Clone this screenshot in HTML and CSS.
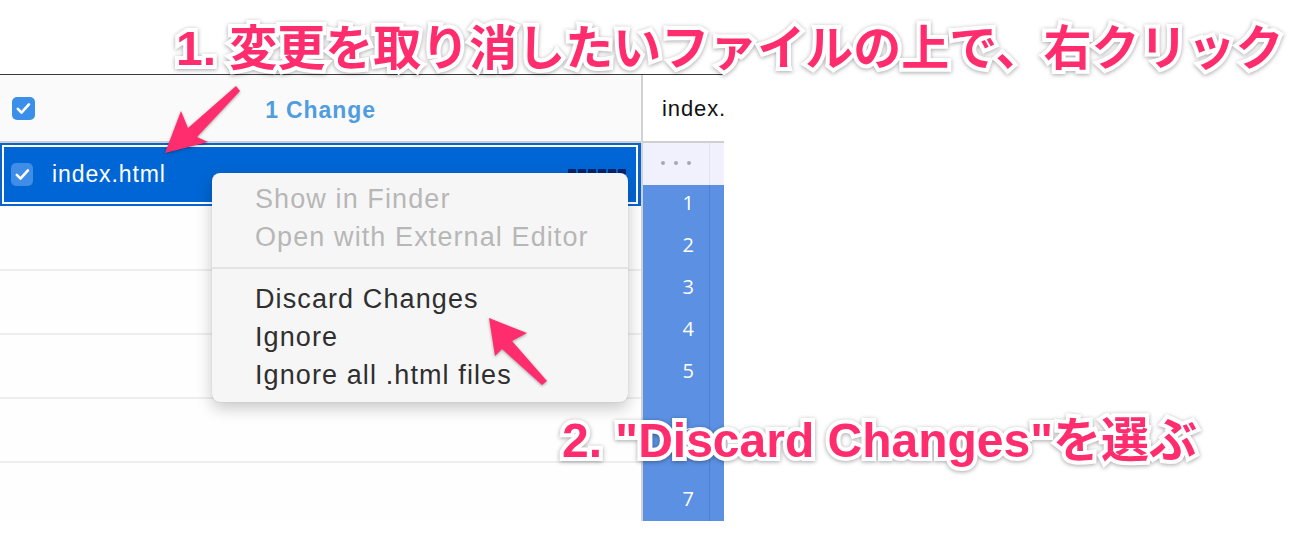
FILE: index.html
```html
<!DOCTYPE html>
<html lang="ja">
<head>
<meta charset="utf-8">
<link rel="stylesheet" href="styles.css">
</head>
<body>
<div class="stage">
  <div class="window">
    <div class="changes">
      <div class="changes-header">
        <span class="cb cb-header"><svg viewBox="0 0 24 24"><path d="M5.5 12.5l4.2 4.2 8.5-9.4" /></svg></span>
        <span class="count">1 Change</span>
      </div>
      <div class="file-row selected">
        <div class="file-inner">
          <span class="cb cb-row"><svg viewBox="0 0 24 24"><path d="M5.5 12.5l4.2 4.2 8.5-9.4" /></svg></span>
          <span class="fname">index.html</span>
          <span class="dashes"></span>
        </div>
      </div>
      <div class="file-row empty first"></div>
      <div class="file-row empty"></div>
      <div class="file-row empty"></div>
      <div class="file-row empty"></div>
    </div>
    <div class="diff">
      <div class="diff-header"><span class="diff-title">index.html</span></div>
      <div class="hunk"><span class="gut"><i class="dot"></i><i class="dot"></i><i class="dot"></i></span><span class="code"></span></div>
      <div class="line"><span class="gut">1</span><span class="code"></span></div>
      <div class="line"><span class="gut">2</span><span class="code"></span></div>
      <div class="line"><span class="gut">3</span><span class="code"></span></div>
      <div class="line"><span class="gut">4</span><span class="code"></span></div>
      <div class="line"><span class="gut">5</span><span class="code"></span></div>
      <div class="line tall"><span class="gut">6</span><span class="code"></span></div>
      <div class="line"><span class="gut">7</span><span class="code"></span></div>
    </div>
  </div>

  <div class="menu">
    <div class="item disabled">Show in Finder</div>
    <div class="item disabled">Open with External Editor</div>
    <div class="sep"></div>
    <div class="item">Discard Changes</div>
    <div class="item">Ignore</div>
    <div class="item">Ignore all .html files</div>
  </div>

  <div class="note note1">1. 変更を取り消したいファイルの上で、右クリック</div>
  <div class="note note2">2. "Discard Changes"を選ぶ</div>

  <svg class="arrows" width="1300" height="560" viewBox="0 0 1300 560">
    <path class="arrow" d="M165 153 L181 111 L188 128 L236 86 L240 91 L197 137 L208 142 Z" />
    <path class="arrow" d="M489 318 L527 333 L512 341 L547 381 L542 385 L502 349 L495 356 Z" />
  </svg>
</div>
</body>
</html>
```

FILE: styles.css
```css
html, body {
  margin: 0;
  padding: 0;
  background: #ffffff;
}

.stage {
  position: relative;
  width: 1300px;
  height: 560px;
  overflow: hidden;
  font-family: "Liberation Sans", Arial, sans-serif;
}

.window {
  margin-top: 74px;
  width: 724px;
  height: 446px;
  border-top: 1px solid #3a3a3a;
  display: flex;
  overflow: hidden;
}

/* left panel */
.changes {
  width: 641px;
  flex: none;
  border-right: 2px solid #d2d2d2;
  background: #fefefe;
  display: flex;
  flex-direction: column;
}

.changes-header {
  height: 66px;
  flex: none;
  background: #fafafa;
  border-bottom: 2px solid #d0d0d0;
  position: relative;
  display: flex;
  align-items: center;
  justify-content: center;
}

.cb {
  width: 23px;
  height: 23px;
  border-radius: 5px;
  background: #3b8fe8;
  display: flex;
  align-items: center;
  justify-content: center;
  flex: none;
}

.cb svg {
  width: 21px;
  height: 21px;
  fill: none;
  stroke: #ffffff;
  stroke-width: 3;
  stroke-linecap: round;
  stroke-linejoin: round;
}

.cb-header {
  position: absolute;
  left: 12px;
  top: 22px;
}

.count {
  font-size: 23px;
  font-weight: bold;
  color: #4f9de0;
  letter-spacing: 0.9px;
  margin-top: 5px;
}

.file-row {
  flex: none;
  height: 62px;
  border-bottom: 2px solid #eeeeee;
  box-sizing: content-box;
}

.file-row.first {
  height: 63px;
}

.file-row.selected {
  height: 63px;
  border-bottom: none;
  box-sizing: border-box;
  border: 2px solid #0a63cf;
  border-right-width: 3px;
  padding: 2px;
  background: #ffffff;
}

.file-inner {
  height: 100%;
  background: #0166d5;
  display: flex;
  align-items: center;
  padding-left: 7px;
  position: relative;
}

.cb-row {
  background: #3f8de6;
  width: 22px;
  height: 23px;
}

.fname {
  margin-left: 19px;
  font-size: 23px;
  color: #ffffff;
  letter-spacing: 0.9px;
}

.dashes {
  position: absolute;
  left: 564px;
  top: 22px;
  width: 58px;
  height: 5px;
  background: repeating-linear-gradient(90deg, #06246b 0 8px, transparent 8px 10px);
}

/* right diff panel */
.diff {
  flex: 1;
  display: flex;
  flex-direction: column;
  background: #ffffff;
  overflow: hidden;
}

.diff-header {
  height: 66px;
  flex: none;
  border-bottom: 2px solid #d0d0d0;
  display: flex;
  align-items: center;
  padding-left: 19px;
  overflow: hidden;
  white-space: nowrap;
}

.diff-title {
  font-size: 22px;
  color: #111111;
  letter-spacing: 0.9px;
  margin-top: 1px;
}

.hunk, .line {
  display: flex;
  flex: none;
  height: 42px;
}

.gut {
  width: 51px;
  flex: none;
  padding-right: 15px;
  padding-bottom: 7px;
  box-sizing: content-box;
  display: flex;
  align-items: center;
  justify-content: flex-end;
  font-family: "Open Sans", "Liberation Sans", sans-serif;
  font-size: 20px;
}

.code {
  flex: 1;
}

.hunk {
  background: #f1f1fd;
}

.hunk .gut {
  border-right: 1px solid #e2e2f6;
  gap: 9px;
  padding-right: 18px;
  width: 48px;
  padding-bottom: 2px;
}

.dot {
  width: 4px;
  height: 4px;
  border-radius: 50%;
  background: #a8a8b4;
}

.line {
  background: #5b90e2;
}

.line .gut {
  color: #ffffff;
  border-right: 1px solid #4c80d4;
}

.line.tall {
  height: 86px;
}

/* context menu overlay */
.menu {
  position: absolute;
  left: 212px;
  top: 173px;
  width: 416px;
  box-sizing: border-box;
  padding: 7px 0 8px;
  background: #f6f6f6;
  border-radius: 8px;
  box-shadow: 0 6px 16px rgba(0, 0, 0, 0.22), 0 0 1px rgba(0, 0, 0, 0.25);
}

.item {
  height: 38px;
  line-height: 38px;
  padding-left: 43px;
  font-size: 27px;
  letter-spacing: 1.1px;
  color: #2f2f2f;
  white-space: nowrap;
}

.item.disabled {
  color: #b7b7b7;
}

.sep {
  height: 2px;
  margin: 11px 0;
  background: #e3e3e3;
}

/* annotations */
.note {
  position: absolute;
  color: #ff2d6e;
  font-weight: bold;
  white-space: nowrap;
  -webkit-text-stroke: 8px #ffffff;
  paint-order: stroke fill;
  filter: drop-shadow(0 1px 2px rgba(0, 0, 0, 0.35));
  line-height: 1;
}

.note1 {
  left: 176px;
  top: 25px;
  font-size: 48px;
  font-family: "Liberation Sans", "Noto Sans CJK JP", sans-serif;
}

.note2 {
  left: 562px;
  top: 417px;
  font-size: 48px;
  font-family: "Liberation Sans", "Noto Sans CJK JP", sans-serif;
}

.arrows {
  position: absolute;
  left: 0;
  top: 0;
  pointer-events: none;
}

.arrow {
  fill: #ff2d6e;
  filter: drop-shadow(0 1px 1.5px rgba(0, 0, 0, 0.35));
}
```
